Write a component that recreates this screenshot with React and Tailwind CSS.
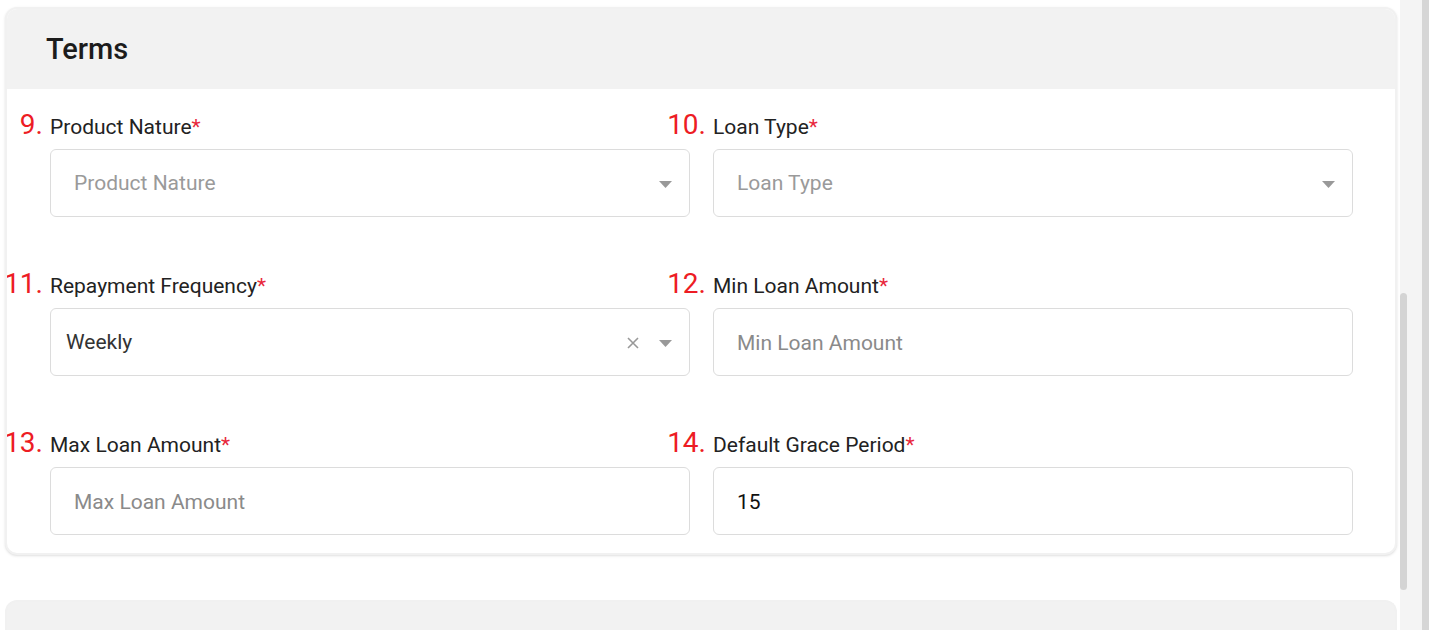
import React from 'react';

const Caret = () => (
  <svg width="13" height="7" viewBox="0 0 13 7" className="shrink-0">
    <path d="M0 0 L13 0 L6.5 7 Z" fill="#999999" />
  </svg>
);

const Cross = () => (
  <svg width="12" height="12" viewBox="0 0 12 12" className="shrink-0">
    <path d="M1 1 L11 11 M11 1 L1 11" stroke="#999999" strokeWidth="1.6" />
  </svg>
);

const Field = ({ num, label, children }) => (
  <div className="flex flex-col">
    {/* label row with number hanging to the left */}
    <div className="flex items-baseline h-[32px] -mt-[1px] mb-[1px]">
      <span className="w-[40px] -ml-[47px] mr-[7px] text-right text-[28px] leading-[32px] text-[#ed1c24]">{num}.</span>
      <span className="text-[21px] leading-[32px] text-[#222]">
        {label}
        <span className="text-[#e8283c]">*</span>
      </span>
    </div>
    <div className="mt-[7px]">{children}</div>
  </div>
);

const SelectBox = ({ value, placeholder, clearable }) => (
  <div className="h-[68px] rounded-[6px] border border-[#dcdcdc] bg-white flex items-center pr-[17px] pt-[2px]">
    {value ? (
      <span className="flex-1 pl-[15px] text-[21px] text-[#333]">{value}</span>
    ) : (
      <span className="flex-1 pl-[23px] text-[21px] text-[#9a9a9a]">{placeholder}</span>
    )}
    {clearable && (
      <span className="mr-[20px] flex items-center">
        <Cross />
      </span>
    )}
    <Caret />
  </div>
);

const InputBox = ({ value, placeholder }) => (
  <div className="h-[68px] rounded-[6px] border border-[#dcdcdc] bg-white flex items-center pl-[23px] pt-[3px]">
    {value ? (
      <span className="text-[21px] text-[#111]">{value}</span>
    ) : (
      <span className="text-[21px] text-[#8a8a8a]">{placeholder}</span>
    )}
  </div>
);

export default function App() {
  return (
    <div className="h-[630px] w-full overflow-hidden flex bg-white" style={{ fontFamily: 'Roboto, "Liberation Sans", sans-serif' }}>
      {/* scroll content */}
      <div className="flex-1 pl-[5px] pr-[3px] pt-[7px] flex flex-col">
        {/* Terms card */}
        <div className="shrink-0 rounded-[12px] border-2 border-[#f1f1f1] shadow-sm overflow-hidden bg-white">
          <div className="h-[80px] bg-[#f2f2f2] flex items-center pl-[39px] pt-[2px]">
            <h2 className="text-[29px] font-medium text-[#1c1c1c]">Terms</h2>
          </div>
          <div className="pt-[21px] pb-[18px] pl-[43px] grid grid-cols-[640px_640px] gap-x-[23px] gap-y-[52px]">
            <Field num={9} label="Product Nature">
              <SelectBox placeholder="Product Nature" />
            </Field>
            <Field num={10} label="Loan Type">
              <SelectBox placeholder="Loan Type" />
            </Field>
            <Field num={11} label="Repayment Frequency">
              <SelectBox value="Weekly" clearable />
            </Field>
            <Field num={12} label="Min Loan Amount">
              <InputBox placeholder="Min Loan Amount" />
            </Field>
            <Field num={13} label="Max Loan Amount">
              <InputBox placeholder="Max Loan Amount" />
            </Field>
            <Field num={14} label="Default Grace Period">
              <InputBox value="15" />
            </Field>
          </div>
        </div>

        {/* next card, cut off */}
        <div className="mt-[45px] h-[80px] shrink-0 rounded-t-[12px] border-2 border-b-0 border-[#f1f1f1] bg-[#f2f2f2]" />
      </div>

      {/* inner scrollbar */}
      <div className="w-[22px] h-full bg-[#f4f4f4] shrink-0">
        <div className="mt-[293px] w-[7px] h-[297px] rounded-full bg-[#d4d4d4]" />
      </div>
      {/* outer scrollbar track */}
      <div className="w-[7px] h-full bg-[#d6d6d6] shrink-0" />
    </div>
  );
}
